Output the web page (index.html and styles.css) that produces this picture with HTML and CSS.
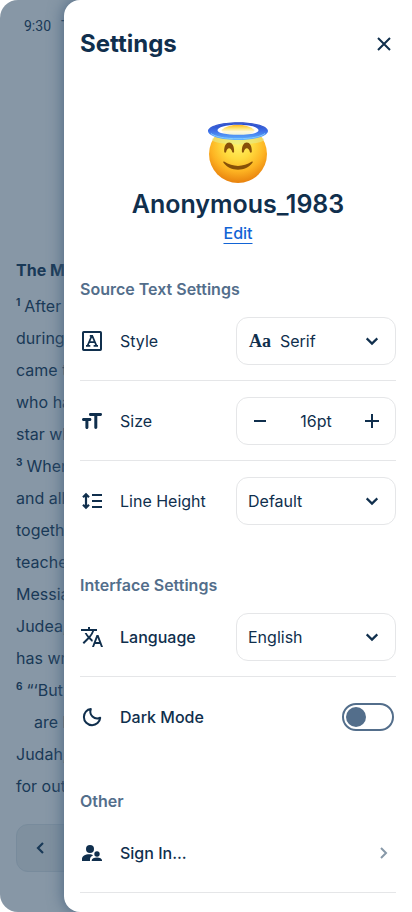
FILE: index.html
```html
<!DOCTYPE html>
<html lang="en">
<head>
<meta charset="utf-8">
<meta name="viewport" content="width=device-width, initial-scale=1">
<title>Settings</title>
<link rel="stylesheet" href="styles.css">
</head>
<body>
<div class="screen">
  <main class="reader">
    <div class="status"><span>9:30</span><span>Thu</span></div>
    <article class="passage">
      <h2>The Magi</h2>
      <p><sup>1</sup>After Jesus</p>
      <p>during the</p>
      <p>came to</p>
      <p>who has</p>
      <p>star when</p>
      <p><sup>3</sup>When</p>
      <p>and all</p>
      <p>together</p>
      <p>teachers</p>
      <p>Messiah</p>
      <p>Judea,”</p>
      <p>has written</p>
      <p><sup>6</sup>“‘But you</p>
      <p class="indent">are by</p>
      <p>Judah;</p>
      <p>for out of</p>
    </article>
    <nav class="pager">
      <button type="button" aria-label="Previous chapter">
        <svg class="icon" viewBox="0 0 24 24"><path d="m15 7-5 5 5 5" fill="none" stroke="currentColor" stroke-width="2.200"/></svg>
      </button>
    </nav>
  </main>

  <aside class="drawer">
    <header class="drawer-head">
      <h1>Settings</h1>
      <button class="close" type="button" aria-label="Close">
        <svg class="icon" viewBox="0 0 24 24"><path d="m6 6 12 12M18 6 6 18" fill="none" stroke="currentColor" stroke-width="2"/></svg>
      </button>
    </header>

    <section class="profile">
      <svg class="avatar" viewBox="0 0 64 64" aria-hidden="true">
        <defs>
          <radialGradient id="face" cx="32" cy="24" r="38" gradientUnits="userSpaceOnUse">
            <stop offset="0" stop-color="#fff36a"/>
            <stop offset=".4" stop-color="#ffdb3e"/>
            <stop offset=".72" stop-color="#fdb322"/>
            <stop offset="1" stop-color="#ea850f"/>
          </radialGradient>
          <linearGradient id="halo" x1="0" y1="0" x2="0" y2="1">
            <stop offset="0" stop-color="#2341be"/>
            <stop offset=".5" stop-color="#3e70e8"/>
            <stop offset="1" stop-color="#62b5ff"/>
          </linearGradient>
          <linearGradient id="glow" x1="0" y1="0" x2="0" y2="1">
            <stop offset="0" stop-color="#ffb51f"/>
            <stop offset=".3" stop-color="#ffe36a"/>
            <stop offset=".6" stop-color="#fff8d8"/>
            <stop offset="1" stop-color="#e9f3d9"/>
          </linearGradient>
        </defs>
        <circle cx="32" cy="34" r="29" fill="url(#face)"/>
        <ellipse cx="32" cy="19.500" rx="26" ry="5" fill="#e5ed8d" opacity=".6"/>
        <ellipse cx="32" cy="10.500" rx="22" ry="6" fill="#fff"/>
        <path d="M15.500 10C20 6.400 26 4.800 32 4.800S44 6.400 48.500 10c.6 3-8.500 6-16.500 6s-17-3-16.500-6Z" fill="url(#glow)"/>
        <path fill="url(#halo)" fill-rule="evenodd" d="M32 2.200C15 2.200 2 6 2 11s13 9 30 9 30-4 30-9S49 2.200 32 2.200Zm0 2.600c12.500 0 20.500 2.400 20.500 5.500S43.500 14.800 32 14.800s-20.500-1.600-20.500-4.500 8-5.500 20.500-5.500Z"/>
        <path d="M4 10.500C4 6.500 16 3.300 32 3.300s28 3.200 28 7.200" fill="none" stroke="#4265d8" stroke-width=".8"/>
        <path d="M5 13.500c4 3.300 14 5.200 27 5.200s23-1.900 27-5.200" fill="none" stroke="#83caff" stroke-width="1"/>
        <path d="M18.200 31.800c-.3-6 1.900-9.400 4.900-9.400s5.300 3.400 5 9.400c-.3 1.100-1.500 1.100-1.900.1-.7-2.400-1.700-3.600-3.100-3.600s-2.300 1.200-3 3.600c-.4 1-1.600 1-1.900-.1Zm17.700 0c-.3-6 1.900-9.400 4.900-9.400s5.300 3.400 5 9.400c-.3 1.100-1.500 1.100-1.900.1-.7-2.400-1.700-3.600-3.100-3.600s-2.300 1.200-3 3.600c-.4 1-1.600 1-1.900-.1Z" fill="#875008"/>
        <path d="M18.500 41.800c8 5.500 19 5.500 27 0 1-.7 1.600.1 1 1-6.500 9.200-22.500 9.200-29 0-.6-.9 0-1.700 1-1Z" fill="#875008"/>
      </svg>
      <h2>Anonymous_1983</h2>
      <a href="#edit">Edit</a>
    </section>

    <section class="group source">
      <h3>Source Text Settings</h3>
      <div class="row">
        <svg class="icon" viewBox="0 0 24 24"><rect x="3" y="3" width="18" height="18" rx=".7" fill="none" stroke="currentColor" stroke-width="2"/><path d="m7.700 16.300 4-9.500h.6l4 9.500M9.200 13.200h5.600M6 16.800h4.300M13.600 16.800H18M9.800 6.900H13" fill="none" stroke="currentColor" stroke-width="1.700"/></svg>
        <label for="style">Style</label>
        <div class="field">
          <span class="sample" aria-hidden="true">Aa</span>
          <select id="style" class="with-sample"><option>Serif</option></select>
          <svg class="icon chevron" viewBox="0 0 24 24"><path d="m6.700 9.400 5.300 5.200 5.300-5.200" fill="none" stroke="currentColor" stroke-width="2.200"/></svg>
        </div>
      </div>
      <div class="row">
        <svg class="icon" viewBox="0 0 24 24"><path d="M10.500 4h10c.8 0 1.500.5 1.500 1.400s-.7 1.500-1.500 1.500h-3.200v11.400c0 .9-.6 1.600-1.500 1.600s-1.500-.7-1.500-1.600V6.900h-3.800C9.700 6.900 9 6.300 9 5.400S9.700 4 10.500 4ZM3.500 9H10c.8 0 1.400.6 1.400 1.500S10.800 12 10 12H8.400v6.400c0 .9-.6 1.500-1.500 1.500s-1.500-.6-1.500-1.500V12H3.500C2.700 12 2 11.400 2 10.500S2.700 9 3.500 9Z" fill="currentColor"/></svg>
        <span class="label" id="size-label">Size</span>
        <div class="field stepper" role="group" aria-labelledby="size-label">
          <button type="button" aria-label="Decrease size"><svg class="icon" viewBox="0 0 24 24"><path d="M6 12h12" stroke="currentColor" stroke-width="2"/></svg></button>
          <output>16pt</output>
          <button type="button" aria-label="Increase size"><svg class="icon" viewBox="0 0 24 24"><path d="M5 12h14M12 5v14" stroke="currentColor" stroke-width="2"/></svg></button>
        </div>
      </div>
      <div class="row">
        <svg class="icon" viewBox="0 0 24 24"><path d="M12 6h10M12 12h10M12 18h10" stroke="currentColor" stroke-width="2"/><path d="M6 6v12M3 8.300l3-3 3 3M3 15.700l3 3 3-3" fill="none" stroke="currentColor" stroke-width="2.200"/></svg>
        <label for="line-height">Line Height</label>
        <div class="field">
          <select id="line-height"><option>Default</option></select>
          <svg class="icon chevron" viewBox="0 0 24 24"><path d="m6.700 9.400 5.300 5.200 5.300-5.200" fill="none" stroke="currentColor" stroke-width="2.200"/></svg>
        </div>
      </div>
    </section>

    <section class="group">
      <h3>Interface Settings</h3>
      <div class="row">
        <svg class="icon" viewBox="0 0 24 24"><path fill="currentColor" d="m12.870 15.070-2.540-2.510.03-.03A17.520 17.520 0 0 0 14.070 6H17V4h-7V2H8v2H1v1.990h11.170C11.500 7.920 10.440 9.750 9 11.350 8.070 10.320 7.300 9.190 6.690 8h-2c.73 1.630 1.730 3.170 2.980 4.560l-5.090 5.020L4 19l5-5 3.110 3.110.76-2.040ZM18.500 10h-2L12 22h2l1.120-3h4.750L21 22h2l-4.500-12Zm-2.620 7 1.620-4.330L19.120 17h-3.240Z"/></svg>
        <label for="language">Language</label>
        <div class="field">
          <select id="language"><option>English</option></select>
          <svg class="icon chevron" viewBox="0 0 24 24"><path d="m6.700 9.400 5.300 5.200 5.300-5.200" fill="none" stroke="currentColor" stroke-width="2.200"/></svg>
        </div>
      </div>
      <div class="row">
        <svg class="icon" viewBox="0 0 24 24"><path d="M10.800 4.100C8.700 9.700 14.200 15.200 20.200 12.800c-.4 4.300-3.900 7.400-8.100 7.400-4.600 0-8.200-3.600-8.200-8.200 0-4.200 3-7.600 6.900-7.900Z" fill="none" stroke="currentColor" stroke-width="2" stroke-linejoin="round"/></svg>
        <label for="dark">Dark Mode</label>
        <input id="dark" class="toggle" type="checkbox" role="switch">
      </div>
    </section>

    <section class="group">
      <h3>Other</h3>
      <a class="row link" href="#sign-in">
        <svg class="icon" viewBox="0 0 24 24"><circle cx="10" cy="8" r="4" fill="currentColor"/><circle cx="17" cy="13" r="2.700" fill="currentColor"/><path fill="currentColor" d="M10.400 13.200C5.500 12.900 2 15 2 17.800V20h8v-1.500c0-1.800 1.100-3.200 2.900-3.900-.3-.9-.8-1.300-2.500-1.400ZM17 16.500c-3 0-5.300 1.200-5.300 2.700v.8H22v-.8c0-1.500-2.200-2.700-5-2.700Z"/></svg>
        <span class="label">Sign In...</span>
        <svg class="icon next" viewBox="0 0 24 24"><path d="m9 7 5 5-5 5" fill="none" stroke="currentColor" stroke-width="2"/></svg>
      </a>
    </section>
  </aside>
</div>
</body>
</html>
```

FILE: styles.css
```css
:root {
  --ink: #102f4d;
  --muted: #536e8b;
  --line: #e5e6e8;
  --scrim: #8797a6;
}

* {
  box-sizing: border-box;
}

body {
  margin: 0;
  background: #fff;
  color: var(--ink);
  font: 16px/24px Inter, "Liberation Sans", sans-serif;
}

h1, h2, h3, p {
  margin: 0;
}

button, select {
  color: inherit;
  font: inherit;
}

button {
  display: grid;
  place-items: center;
  padding: 0;
  border: 0;
  background: none;
}

.icon {
  display: block;
  flex: none;
  width: 24px;
  height: 24px;
}

.screen {
  display: grid;
  grid-template-columns: minmax(0, 1fr);
  min-height: 100vh;
}

.reader, .drawer {
  grid-area: 1 / 1;
}

.reader {
  display: flex;
  flex-direction: column;
  overflow: hidden;
  border-radius: 18px;
  background: var(--scrim);
  color: #193957;
  white-space: nowrap;
}

.status {
  display: flex;
  gap: 10px;
  padding: 16px 24px;
  font: 14px/20px Roboto, sans-serif;
}

.passage {
  padding: 206px 16px 0;
  line-height: 32px;
}

.passage h2 {
  margin-bottom: 8px;
  font-size: 16px;
  line-height: 24px;
  font-weight: 700;
}

.passage sup {
  margin-right: 4px;
  font-size: 10px;
  font-weight: 700;
  line-height: 1;
}

.passage .indent {
  padding-left: 18px;
}

.pager {
  margin: 22px 16px 40px;
  border: 1px solid #788b9c;
  border-radius: 12px;
  background: #7f909f;
}

.pager button {
  width: 46px;
  height: 46px;
}

.drawer {
  display: flex;
  flex-direction: column;
  gap: 32px;
  margin-left: 64px;
  padding: 24px 16px 16px;
  border-radius: 16px 0 0 16px;
  background: #fff;
  box-shadow: 0 0 16px #48647f;
  clip-path: inset(0 0 0 -32px);
}

.drawer-head {
  display: flex;
  align-items: center;
  justify-content: space-between;
  height: 40px;
}

h1 {
  font-size: 24px;
  line-height: 32px;
  font-weight: 700;
}

.close {
  width: 24px;
  height: 40px;
}

.profile {
  display: flex;
  flex-direction: column;
  align-items: center;
  padding-top: 24px;
}

.avatar {
  width: 64px;
  height: 64px;
}

.profile h2 {
  margin-top: 3px;
  font-size: 25px;
  line-height: 34px;
  font-weight: 600;
}

.profile a {
  color: #1264d5;
  font-weight: 500;
  text-decoration-thickness: 1px;
  text-underline-offset: 4px;
}

h3 {
  color: var(--muted);
  font-size: 16px;
  line-height: 24px;
  font-weight: 600;
}

.row {
  display: flex;
  align-items: center;
  gap: 16px;
  height: 80px;
  border-bottom: 1px solid var(--line);
}

.row:last-child:not(.link) {
  border-color: transparent;
}

.row > label, .row > .label {
  flex: 1;
  font-weight: 500;
}

.source .row > label, .source .row > .label {
  font-weight: 400;
}

.field {
  position: relative;
  display: flex;
  align-items: center;
  width: 160px;
  height: 48px;
  border: 1px solid var(--line);
  border-radius: 12px;
}

select {
  width: 100%;
  height: 100%;
  padding: 0 40px 0 11px;
  border: 0;
  border-radius: 12px;
  appearance: none;
  background: none;
}

.with-sample {
  padding-left: 43px;
}

.sample {
  position: absolute;
  left: 12px;
  font-family: "Liberation Serif", serif;
  font-size: 18px;
  font-weight: 700;
}

.chevron {
  position: absolute;
  right: 11px;
  pointer-events: none;
}

.stepper {
  justify-content: space-between;
}

.stepper button {
  width: 46px;
  height: 46px;
}

.toggle {
  display: flex;
  align-items: center;
  width: 52px;
  height: 28px;
  margin: 0 2px;
  padding: 2px;
  border: 2px solid var(--muted);
  border-radius: 14px;
  appearance: none;
}

.toggle::before {
  content: "";
  width: 20px;
  height: 20px;
  border-radius: 50%;
  background: var(--muted);
}

.toggle:checked {
  justify-content: flex-end;
}

.link {
  color: inherit;
  text-decoration: none;
}

.next {
  color: #8798a8;
}
```
